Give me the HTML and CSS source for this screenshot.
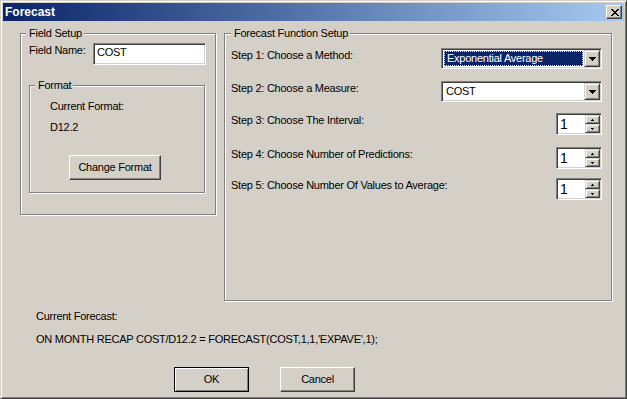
FILE: index.html
```html
<!DOCTYPE html>
<html>
<head>
<meta charset="utf-8">
<title>Forecast</title>
<link rel="stylesheet" href="styles.css">
</head>
<body>
<div class="window">
  <div class="titlebar">
    <span class="title">Forecast</span>
    <div class="close">
      <svg width="8" height="7" viewBox="0 0 8 7" shape-rendering="crispEdges"><path d="M0 0h2v1H0zM6 0h2v1H6zM1 1h2v1H1zM5 1h2v1H5zM2 2h4v1H2zM3 3h2v1H3zM2 4h4v1H2zM1 5h2v1H1zM5 5h2v1H5zM0 6h2v1H0zM6 6h2v1H6z" fill="#000"/></svg>
    </div>
  </div>
  <div class="client">
    <div class="top">
      <div class="group field-setup">
        <span class="legend">Field Setup</span>
        <div class="field-row">
          <span class="field-label">Field Name:</span>
          <div class="edit">COST</div>
        </div>
        <div class="group format">
          <span class="legend">Format</span>
          <div class="fmt-line">Current Format:</div>
          <div class="fmt-line fmt-value">D12.2</div>
          <div class="btn fmt-btn">Change Format</div>
        </div>
      </div>
      <div class="group func">
        <span class="legend legend-wide">Forecast Function Setup</span>
        <div class="steps">
          <span class="step-label">Step 1: Choose a Method:</span>
          <div class="combo">
            <div class="combo-value selected"><span class="focus">Exponential Average</span></div>
            <div class="drop-btn"><svg width="7" height="4" viewBox="0 0 7 4" shape-rendering="crispEdges"><path d="M0 0h7v1H0zM1 1h5v1H1zM2 2h3v1H2zM3 3h1v1H3z" fill="#000"/></svg></div>
          </div>
          <span class="step-label">Step 2: Choose a Measure:</span>
          <div class="combo">
            <div class="combo-value">COST</div>
            <div class="drop-btn"><svg width="7" height="4" viewBox="0 0 7 4" shape-rendering="crispEdges"><path d="M0 0h7v1H0zM1 1h5v1H1zM2 2h3v1H2zM3 3h1v1H3z" fill="#000"/></svg></div>
          </div>
          <span class="step-label">Step 3: Choose The Interval:</span>
          <div class="spinner">
            <div class="spin-value">1</div>
            <div class="spin-btns">
              <div class="spin-btn"><svg width="3" height="2" viewBox="0 0 3 2" shape-rendering="crispEdges"><path d="M1 0h1v1H1zM0 1h3v1H0z" fill="#000"/></svg></div>
              <div class="spin-btn"><svg width="3" height="2" viewBox="0 0 3 2" shape-rendering="crispEdges"><path d="M0 0h3v1H0zM1 1h1v1H1z" fill="#000"/></svg></div>
            </div>
          </div>
          <span class="step-label">Step 4: Choose Number of Predictions:</span>
          <div class="spinner">
            <div class="spin-value">1</div>
            <div class="spin-btns">
              <div class="spin-btn"><svg width="3" height="2" viewBox="0 0 3 2" shape-rendering="crispEdges"><path d="M1 0h1v1H1zM0 1h3v1H0z" fill="#000"/></svg></div>
              <div class="spin-btn"><svg width="3" height="2" viewBox="0 0 3 2" shape-rendering="crispEdges"><path d="M0 0h3v1H0zM1 1h1v1H1z" fill="#000"/></svg></div>
            </div>
          </div>
          <span class="step-label">Step 5: Choose Number Of Values to Average:</span>
          <div class="spinner">
            <div class="spin-value">1</div>
            <div class="spin-btns">
              <div class="spin-btn"><svg width="3" height="2" viewBox="0 0 3 2" shape-rendering="crispEdges"><path d="M1 0h1v1H1zM0 1h3v1H0z" fill="#000"/></svg></div>
              <div class="spin-btn"><svg width="3" height="2" viewBox="0 0 3 2" shape-rendering="crispEdges"><path d="M0 0h3v1H0zM1 1h1v1H1z" fill="#000"/></svg></div>
            </div>
          </div>
        </div>
      </div>
    </div>
    <div class="forecast">
      <div class="forecast-label">Current Forecast:</div>
      <div class="forecast-text">ON MONTH RECAP COST/D12.2 = FORECAST(COST,1,1,'EXPAVE',1);</div>
    </div>
    <div class="actions">
      <div class="btn btn-default">OK</div>
      <div class="btn">Cancel</div>
    </div>
  </div>
</div>
</body>
</html>
```
FILE: styles.css
```css
* {
  box-sizing: border-box;
}

body {
  margin: 0;
  background: #d4d0c8;
  font-family: "Liberation Sans", Arial, sans-serif;
  font-size: 11px;
  line-height: 13px;
  letter-spacing: -0.25px;
  color: #000;
}

.window {
  width: 627px;
  height: 399px;
  display: flex;
  flex-direction: column;
  background: #d4d0c8;
  border: 1px solid;
  border-color: #d4d0c8 #404040 #404040 #d4d0c8;
  box-shadow: inset 1px 1px #fff, inset -1px -1px #808080;
  padding: 2px;
}

.titlebar {
  height: 18px;
  flex: none;
  display: flex;
  align-items: center;
  justify-content: space-between;
  padding: 0 2px 0 2px;
  background: linear-gradient(to right, #0a246a, #a6caf0);
}

.title {
  color: #fff;
  font-weight: bold;
  font-size: 12px;
  letter-spacing: 0;
}

.close {
  width: 16px;
  height: 14px;
  background: #d4d0c8;
  border: 1px solid;
  border-color: #fff #404040 #404040 #fff;
  box-shadow: inset -1px -1px #808080;
  display: flex;
  align-items: center;
  justify-content: center;
  padding-left: 1px;
}

.close svg {
  display: block;
}

.client {
  flex: 1;
  display: flex;
  flex-direction: column;
  padding: 12px 0 0 17px;
}

.top {
  display: flex;
  align-items: flex-start;
}

.group {
  position: relative;
  flex: none;
  border: 1px solid #808080;
  box-shadow: 1px 1px #fff, inset 1px 1px #fff;
}

.legend {
  position: absolute;
  top: -7px;
  left: 5px;
  padding: 0 2px 0 3px;
  background: #d4d0c8;
  white-space: nowrap;
}

.legend-wide {
  left: 6px;
}

.field-setup {
  width: 196px;
  height: 182px;
  padding: 9px 0 0 8px;
}

.field-row {
  display: flex;
  align-items: flex-start;
}

.field-label {
  width: 64px;
  margin-top: 1px;
}

.edit {
  width: 113px;
  height: 22px;
  background: #fff;
  border: 1px solid;
  border-color: #808080 #fff #fff #808080;
  box-shadow: inset 1px 1px #404040, inset -1px -1px #d4d0c8;
  padding: 2px 0 0 3px;
}

.format {
  width: 176px;
  height: 108px;
  margin-top: 20px;
  padding: 14px 0 0 20px;
}

.fmt-value {
  margin-top: 8px;
}

.btn {
  width: 75px;
  height: 25px;
  display: flex;
  align-items: center;
  justify-content: center;
  background: #d4d0c8;
  border: 1px solid;
  border-color: #fff #404040 #404040 #fff;
  box-shadow: inset -1px -1px #808080;
}

.fmt-btn {
  width: 92px;
  margin: 21px 0 0 19px;
}

.btn-default {
  border: 1px solid #000;
  box-shadow: inset 1px 1px #fff, inset -1px -1px #808080;
}

.func {
  width: 388px;
  height: 268px;
  margin-left: 8px;
  padding: 14px 9px 0 6px;
}

.steps {
  display: grid;
  grid-template-columns: minmax(0, 1fr) auto;
  grid-template-rows: 33px 32px 34px 31px 22px;
  align-items: start;
}

.step-label {
  margin-top: 1px;
  white-space: nowrap;
}

.combo {
  justify-self: end;
  width: 161px;
  height: 21px;
  display: flex;
  background: #fff;
  border: 1px solid;
  border-color: #808080 #fff #fff #808080;
  box-shadow: inset 1px 1px #404040, inset -1px -1px #d4d0c8;
  padding: 1px;
}

.combo-value {
  flex: 1;
  display: flex;
  align-items: center;
  padding-left: 3px;
}

.combo-value.selected {
  margin: 1px 1px 1px 1px;
  padding-left: 0;
  background: #0a246a;
  color: #fff;
}

.focus {
  flex: 1;
  align-self: stretch;
  display: flex;
  align-items: center;
  padding-left: 2px;
  border: 1px dotted #e8e0a0;
}

.drop-btn {
  width: 16px;
  flex: none;
  display: flex;
  align-items: center;
  justify-content: center;
  background: #d4d0c8;
  border: 1px solid;
  border-color: #d4d0c8 #404040 #404040 #d4d0c8;
  box-shadow: inset 1px 1px #fff, inset -1px -1px #808080;
  padding-top: 1px;
}

.drop-btn svg,
.spin-btn svg {
  display: block;
}

.spinner {
  justify-self: end;
  width: 46px;
  height: 22px;
  display: flex;
  background: #fff;
  border: 1px solid;
  border-color: #808080 #fff #fff #808080;
  box-shadow: inset 1px 1px #404040, inset -1px -1px #d4d0c8;
  padding: 1px;
}

.spin-value {
  flex: 1;
  font-size: 14px;
  line-height: 18px;
  padding-left: 2px;
  letter-spacing: 0;
}

.spin-btns {
  width: 15px;
  flex: none;
  display: flex;
  flex-direction: column;
}

.spin-btn {
  flex: 1;
  display: flex;
  align-items: center;
  justify-content: center;
  background: #d4d0c8;
  border: 1px solid;
  border-color: #d4d0c8 #404040 #404040 #d4d0c8;
  box-shadow: inset 1px 1px #fff, inset -1px -1px #808080;
}

.forecast {
  padding: 9px 0 0 16px;
}

.forecast-text {
  margin-top: 10px;
  white-space: nowrap;
}

.actions {
  display: flex;
  gap: 31px;
  padding-left: 154px;
  margin-top: 21px;
}
```
